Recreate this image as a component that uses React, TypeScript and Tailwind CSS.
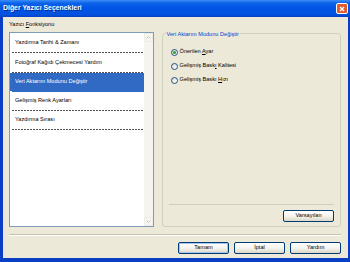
import React from "react";

const items = [
  "Yazdırma Tarihi & Zamanı",
  "Fotoğraf Kağıdı Çekmecesi Yardım",
  "Veri Aktarım Modunu Değiştir",
  "Gelişmiş Renk Ayarları",
  "Yazdırma Sırası",
];
const heights = ["h-[20px]", "h-[20px]", "h-[19px]", "h-[19px]", "h-[19px]"];

function XpButton({ children, isDefault }: { children: React.ReactNode; isDefault?: boolean }) {
  return (
    <button
      className={`w-[51px] h-[12px] rounded-[2px] border border-[#003C74] bg-linear-to-b from-white via-[#F5F4EF] to-[#DCD8C8] text-[5.6px] leading-none text-black flex items-center justify-center ${
        isDefault ? "shadow-[inset_0_0_0_1px_#A8C4F0]" : ""
      }`}>
      {children}
    </button>
  );
}

function Radio({ checked, children }: { checked?: boolean; children: React.ReactNode }) {
  return (
    <div className="h-[14px] flex items-center gap-[2px]">
      <span className="w-[7px] h-[7px] rounded-full border border-[#1C5180] bg-linear-to-br from-[#DCDBD4] to-white flex items-center justify-center">
        {checked && <span className="w-[3px] h-[3px] rounded-full bg-[#21A121]" />}
      </span>
      <span className="text-[5.6px] leading-none text-black">{children}</span>
    </div>
  );
}

function Chevron({ up }: { up?: boolean }) {
  return (
    <svg width="5" height="3" viewBox="0 0 5 3">
      <polyline
        points={up ? "0.5,2.5 2.5,0.5 4.5,2.5" : "0.5,0.5 2.5,2.5 4.5,0.5"}
        fill="none"
        stroke="#C3C3BC"
        strokeWidth="1"
      />
    </svg>
  );
}

export default function App() {
  return (
    <div className="w-[350px] h-[262px] flex flex-col bg-[#0A3EC4] font-['Liberation_Sans',Arial,sans-serif] overflow-hidden">
      <div className="h-[17px] flex items-center justify-between pl-[3px] pr-[2px] bg-[linear-gradient(to_bottom,#3D8EF6_0%,#0C62EA_18%,#0055E5_50%,#0052E0_85%,#0A40C8_100%)]">
        <span className="text-white font-bold text-[6.9px] leading-none [text-shadow:1px_1px_0_#0A2A8A]">
          Diğer Yazıcı Seçenekleri
        </span>
        <span className="w-[12px] h-[11px] rounded-[2px] border border-white bg-[#E35A2C] flex items-center justify-center">
          <svg width="6" height="6" viewBox="0 0 6 6">
            <path d="M1 1L5 5M5 1L1 5" stroke="white" strokeWidth="1.4" />
          </svg>
        </span>
      </div>

      <div className="flex-1 ml-[3px] mr-[2px] mb-[4px] bg-[#ECE9D8] flex flex-col pt-[3px] pl-[6px] pr-[7px] pb-[4px]">
        <div className="h-[12px] text-[5.6px] leading-[8px] text-black">
          Yazıcı <span className="underline">F</span>onksiyonu
        </div>

        <div className="h-[195px] flex gap-[8px]">
          <div className="w-[145px] border border-[#7F9DB9] bg-white flex">
            <div className="flex-1 flex flex-col">
              {items.map((label, i) => {
                const selected = i === 2;
                return (
                  <div key={label} className={`${heights[i]} flex flex-col`}>
                    <div
                      className={`flex-1 flex items-center pl-[5px] text-[5.6px] leading-none ${
                        selected ? "bg-[#316AC5] text-white" : "text-black"
                      }`}>
                      {label}
                    </div>
                    <div
                      className={`h-px ml-[2px] ${
                        selected
                          ? "bg-[#316AC5] -ml-0"
                          : "bg-[repeating-linear-gradient(90deg,#505050_0_2px,transparent_2px_3px)]"
                      }`}
                    />
                  </div>
                );
              })}
            </div>
            <div className="w-[9px] bg-[#F5F4EE] flex flex-col justify-between">
              <div className="h-[9px] rounded-[1px] border border-[#EEEDE5] bg-[#F6F5F0] flex items-center justify-center">
                <Chevron up />
              </div>
              <div className="h-[9px] rounded-[1px] border border-[#EEEDE5] bg-[#F6F5F0] flex items-center justify-center">
                <Chevron />
              </div>
            </div>
          </div>

          <div className="relative mt-[1px] w-[180px] h-[194px] rounded-[3px] border border-[#D0D0BF] flex flex-col pt-[11px] pl-[8px] pr-[6px] pb-[4px]">
            <span className="absolute -top-[4px] left-[3px] px-[1px] bg-[#ECE9D8] text-[5.6px] leading-[8px] text-[#0046D5]">
              Veri Aktarım Modunu Değiştir
            </span>
            <Radio checked>
              Önerilen <span className="underline">A</span>yar
            </Radio>
            <Radio>
              Gelişmiş Bask<span className="underline">ı</span> Kalitesi
            </Radio>
            <Radio>
              Gelişmiş Baskı <span className="underline">H</span>ızı
            </Radio>
            <div className="flex-1" />
            <div className="-ml-[2px] border-t border-[#D0CDBD]" />
            <div className="mt-[5px] flex justify-end">
              <XpButton>Varsayılan</XpButton>
            </div>
          </div>
        </div>

        <div className="mt-[7px] h-[2px] border-t border-[#C5C2B2] border-b border-b-white" />

        <div className="mt-[6px] flex justify-end gap-[5px]">
          <XpButton isDefault>Tamam</XpButton>
          <XpButton>İptal</XpButton>
          <XpButton>Yardım</XpButton>
        </div>
      </div>
    </div>
  );
}
